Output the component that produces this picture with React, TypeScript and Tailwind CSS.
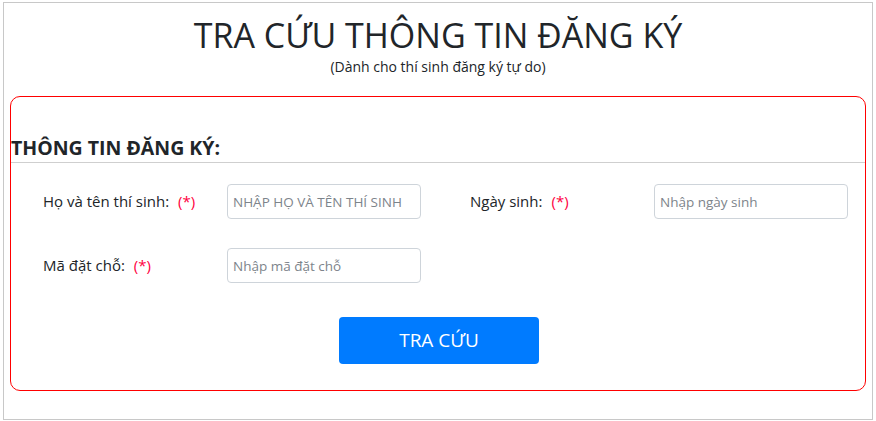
const font = { fontFamily: '"Open Sans", "Noto Sans", sans-serif' }

function Field({ label, placeholder }: { label: string; placeholder: string }) {
  return (
    <div className="flex items-center pl-[32px]">
      <label className="w-[184px] shrink-0 text-[15px] text-[#212529]">
        {label}
        <span className="ml-[9px] text-[#ff0040]">(*)</span>
      </label>
      <input
        className="h-[35px] w-[194px] rounded-[4px] border border-[#ced4da] px-[5px] text-[13.5px] text-[#495057] placeholder:text-[#7d848b] outline-none"
        placeholder={placeholder}
        style={font}
      />
    </div>
  )
}

export default function App() {
  return (
    <div className="min-h-[421px] bg-white pt-[2px] px-[3px]" style={font}>
      <div className="h-[418px] border border-[#c8c8c8] px-[6px]">
        <div className="text-center text-[#212529]">
          <h1 className="pt-[8px] text-[34px] font-normal leading-[48px]">TRA CỨU THÔNG TIN ĐĂNG KÝ</h1>
          <p className="text-[14px] leading-[16px]">(Dành cho thí sinh đăng ký tự do)</p>
        </div>

        <div className="mt-[21px] h-[295px] rounded-[10px] border border-[#ff0000]">
          <h3 className="pt-[39px] pb-[2px] text-[19.5px] font-bold leading-[24px] text-[#212529]">THÔNG TIN ĐĂNG KÝ:</h3>
          <div className="border-t border-[#cfcfcf]" />

          <div className="grid grid-cols-2 pt-[21px]">
            <Field label="Họ và tên thí sinh:" placeholder="NHẬP HỌ VÀ TÊN THÍ SINH" />
            <Field label="Ngày sinh:" placeholder="Nhập ngày sinh" />
          </div>
          <div className="grid grid-cols-2 pt-[29px]">
            <Field label="Mã đặt chỗ:" placeholder="Nhập mã đặt chỗ" />
          </div>

          <div className="flex justify-center pt-[34px]">
            <button className="ml-[2px] h-[47px] w-[200px] rounded-[4px] bg-[#007bff] text-[19px] text-white" style={font}>
              TRA CỨU
            </button>
          </div>
        </div>
      </div>
    </div>
  )
}
